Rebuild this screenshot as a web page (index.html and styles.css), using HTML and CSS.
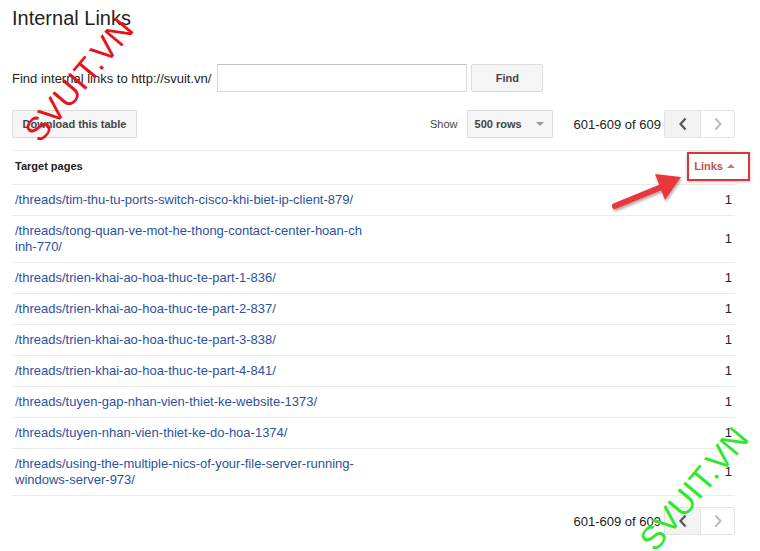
FILE: index.html
```html
<!DOCTYPE html>
<html>
<head>
<meta charset="utf-8">
<link rel="stylesheet" href="styles.css">
</head>
<body>
<div class="page">
  <h1 class="title">Internal Links</h1>
  <div class="find-row">
    <label class="find-label">Find internal links to http://svuit.vn/</label>
    <input class="find-input" type="text">
    <button class="btn find-btn">Find</button>
  </div>
  <div class="toolbar">
    <button class="btn dl-btn">Download this table</button>
    <div class="toolbar-right">
      <span class="show">Show</span>
      <div class="select"><span>500 rows</span><span class="caret"></span></div>
      <span class="range">601-609 of 609</span>
      <div class="pager">
        <div class="pg pg-prev"><svg width="10" height="14" viewBox="0 0 10 14"><path d="M7.5 1.5 L2.5 7 L7.5 12.5" fill="none" stroke="#555" stroke-width="2.2"/></svg></div>
        <div class="pg pg-next"><svg width="10" height="14" viewBox="0 0 10 14"><path d="M2.5 1.5 L7.5 7 L2.5 12.5" fill="none" stroke="#bbb" stroke-width="2"/></svg></div>
      </div>
    </div>
  </div>
  <table class="grid">
    <thead>
      <tr><th class="th-target">Target pages</th><th class="th-links">Links <span class="sort-up"></span></th></tr>
    </thead>
    <tbody>
      <tr><td><div class="url">/threads/tim-thu-tu-ports-switch-cisco-khi-biet-ip-client-879/</div></td><td class="num">1</td></tr>
      <tr><td><div class="url">/threads/tong-quan-ve-mot-he-thong-contact-center-hoan-chinh-770/</div></td><td class="num">1</td></tr>
      <tr><td><div class="url">/threads/trien-khai-ao-hoa-thuc-te-part-1-836/</div></td><td class="num">1</td></tr>
      <tr><td><div class="url">/threads/trien-khai-ao-hoa-thuc-te-part-2-837/</div></td><td class="num">1</td></tr>
      <tr><td><div class="url">/threads/trien-khai-ao-hoa-thuc-te-part-3-838/</div></td><td class="num">1</td></tr>
      <tr><td><div class="url">/threads/trien-khai-ao-hoa-thuc-te-part-4-841/</div></td><td class="num">1</td></tr>
      <tr><td><div class="url">/threads/tuyen-gap-nhan-vien-thiet-ke-website-1373/</div></td><td class="num">1</td></tr>
      <tr><td><div class="url">/threads/tuyen-nhan-vien-thiet-ke-do-hoa-1374/</div></td><td class="num">1</td></tr>
      <tr><td><div class="url">/threads/using-the-multiple-nics-of-your-file-server-running-windows-server-973/</div></td><td class="num">1</td></tr>
    </tbody>
  </table>
  <div class="bottom-pager">
    <span class="range">601-609 of 609</span>
    <div class="pager">
      <div class="pg pg-prev"><svg width="10" height="14" viewBox="0 0 10 14"><path d="M7.5 1.5 L2.5 7 L7.5 12.5" fill="none" stroke="#555" stroke-width="2.2"/></svg></div>
      <div class="pg pg-next"><svg width="10" height="14" viewBox="0 0 10 14"><path d="M2.5 1.5 L7.5 7 L2.5 12.5" fill="none" stroke="#bbb" stroke-width="2"/></svg></div>
    </div>
  </div>
</div>

<div class="highlight-box"></div>
<svg class="arrow" width="90" height="50" viewBox="0 0 90 50">
  <defs>
    <filter id="sh" x="-20%" y="-20%" width="140%" height="140%">
      <feDropShadow dx="1" dy="2" stdDeviation="1.5" flood-color="#000" flood-opacity="0.35"/>
    </filter>
  </defs>
  <g filter="url(#sh)">
    <line x1="6" y1="40" x2="55" y2="20" stroke="#e8383a" stroke-width="6" stroke-linecap="round"/>
    <polygon points="72,11 46,8 56,34" fill="#e8383a"/>
  </g>
</svg>
<div class="wm wm-red">SVUIT.VN</div>
<div class="wm wm-green">SVUIT.VN</div>
</body>
</html>
```

FILE: styles.css
```css
* { box-sizing: border-box; }
html, body { margin: 0; padding: 0; background: #fff; }
body {
  font-family: "Liberation Sans", Arial, sans-serif;
  color: #222;
  font-size: 13px;
  position: relative;
  width: 760px;
  height: 551px;
  overflow: hidden;
}
.page { padding: 0 25px 0 12px; }
.title {
  margin: 6px 0 0 0;
  font-size: 20px;
  line-height: 24px;
  font-weight: normal;
  color: #222;
}
.find-row {
  display: flex;
  align-items: center;
  margin-top: 34px;
  height: 28px;
}
.find-label { font-size: 13px; margin-right: 6px; }
.find-input {
  width: 250px;
  height: 28px;
  border: 1px solid #d9d9d9;
  border-top-color: #c0c0c0;
  margin: 0;
  padding: 0;
}
.btn {
  font-family: "Liberation Sans", Arial, sans-serif;
  font-weight: bold;
  font-size: 11px;
  color: #444;
  background: #f5f5f5;
  border: 1px solid #dcdcdc;
  border-radius: 2px;
  height: 28px;
  padding: 0;
  margin: 0;
}
.find-btn { width: 72px; margin-left: 4px; }
.toolbar {
  display: flex;
  align-items: center;
  justify-content: space-between;
  margin-top: 18px;
  height: 28px;
}
.dl-btn { width: 125px; }
.toolbar-right { display: flex; align-items: center; }
.show { font-size: 11px; color: #444; margin-right: 9px; }
.select {
  width: 86px;
  height: 28px;
  background: #f5f5f5;
  border: 1px solid #dcdcdc;
  border-radius: 2px;
  display: flex;
  align-items: center;
  justify-content: space-between;
  padding: 0 8px 0 7px;
  font-weight: bold;
  font-size: 11px;
  color: #444;
}
.caret {
  width: 0; height: 0;
  border-left: 4px solid transparent;
  border-right: 4px solid transparent;
  border-top: 4px solid #999;
}
.range { font-size: 13px; color: #222; margin-left: 21px; margin-right: 3px; }
.pager { display: flex; }
.pg {
  width: 36px;
  height: 28px;
  border: 1px solid #e3e3e3;
  display: flex;
  align-items: center;
  justify-content: center;
}
.pg-prev { background: #f3f3f3; border-right: none; border-radius: 2px 0 0 2px; }
.pg-next { background: #fff; border-radius: 0 2px 2px 0; width: 35px; }
.grid {
  width: 100%;
  border-collapse: collapse;
  margin-top: 12px;
}
.grid th {
  text-align: left;
  font-size: 11px;
  font-weight: bold;
  color: #222;
  height: 34px;
  padding: 0 3px 4px 3px;
  border-top: 1px solid #ebebeb;
  border-bottom: 1px solid #ebebeb;
}
.grid th.th-links { text-align: right; color: #c0504d; padding-right: 0; width: 80px; }
.sort-up {
  display: inline-block;
  width: 0; height: 0;
  border-left: 4px solid transparent;
  border-right: 4px solid transparent;
  border-bottom: 4px solid #c87a7a;
  vertical-align: 2px;
  margin-left: 1px;
}
.grid td {
  border-bottom: 1px solid #ebebeb;
  padding: 7px 3px 7px 3px;
  font-size: 13px;
  line-height: 16px;
  vertical-align: middle;
}
.url {
  color: #2c51a0;
  width: 348px;
  word-break: break-all;
}
.num { text-align: right; color: #222; font-size: 13px; padding-right: 3px !important; }
.bottom-pager {
  display: flex;
  align-items: center;
  justify-content: flex-end;
  margin-top: 11px;
  height: 28px;
}
.highlight-box {
  position: absolute;
  left: 687px;
  top: 152px;
  width: 63px;
  height: 29px;
  border: 2px solid #d9363a;
  box-shadow: 0 1px 3px rgba(0,0,0,0.25);
}
.arrow {
  position: absolute;
  left: 609px;
  top: 166px;
}
.wm {
  position: absolute;
  font-family: "Liberation Sans", Arial, sans-serif;
  font-size: 33px;
  line-height: 34px;
  white-space: nowrap;
  transform-origin: center center;
}
.wm-red {
  color: #e5141c;
  left: 5px;
  top: 63px;
  transform: rotate(-50deg);
}
.wm-green {
  color: #2ee82e;
  left: 620px;
  top: 472px;
  transform: rotate(-50deg);
}
```
